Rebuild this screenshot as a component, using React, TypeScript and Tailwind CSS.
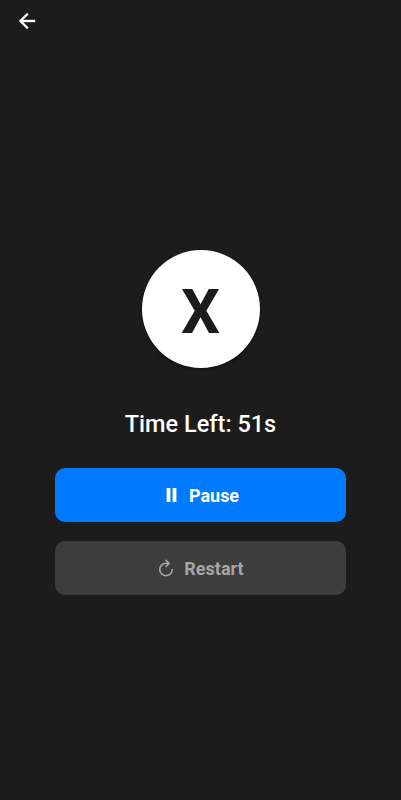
const App = () => {
    return (
        <div className="flex h-[800px] w-full flex-col bg-[#1c1c1c] font-['Roboto',sans-serif]">
            {/* Header */}
            <header className="h-[42px] px-[15px] pt-[9px]">
                <button className="block" aria-label="Back">
                    <svg width="24" height="24" viewBox="0 0 24 24" fill="#fff" stroke="#fff" strokeWidth="0.4">
                        <path d="M20 11H7.83l5.59-5.59L12 4l-8 8 8 8 1.41-1.41L7.83 13H20v-2z" />
                    </svg>
                </button>
            </header>

            <main className="flex flex-col items-center px-[55px] pt-[208px]">
                {/* Current letter */}
                <div className="flex size-[118px] items-center justify-center rounded-full bg-white shadow-[0_2px_3px_rgba(0,0,0,0.35)]">
                    <span className="pt-2 text-[61.5px] font-bold leading-none text-[#1c1c1c]">X</span>
                </div>

                <p className="mt-[38px] text-[23.5px] font-medium leading-9 text-white">Time Left: 51s</p>

                {/* Controls */}
                <button className="mt-[26px] flex h-[54px] w-full items-center justify-center gap-2 rounded-[10px] bg-[#007bff] pr-px text-lg font-bold text-white">
                    <svg width="20" height="20" viewBox="0 0 20 20" fill="currentColor">
                        <path d="M5.6 3h3.8v14H5.6zM11.6 3h3.8v14h-3.8z" />
                    </svg>
                    <span className="pt-px">Pause</span>
                </button>
                <button className="mt-[19px] flex h-[54px] w-full items-center justify-center gap-2 rounded-[10px] bg-[#3d3d3d] pr-px text-lg font-bold text-[#a6a6a6]">
                    <svg width="20" height="20" viewBox="0 0 512 512" fill="none" stroke="currentColor" strokeWidth="42" strokeLinecap="round" strokeMiterlimit="10">
                        <path d="M320 146s24.36-12-64-12a160 160 0 10160 160" />
                        <path d="M256 58l80 80-80 80" strokeLinejoin="round" />
                    </svg>
                    <span className="pt-px">Restart</span>
                </button>
            </main>
        </div>
    );
};

export default App;
